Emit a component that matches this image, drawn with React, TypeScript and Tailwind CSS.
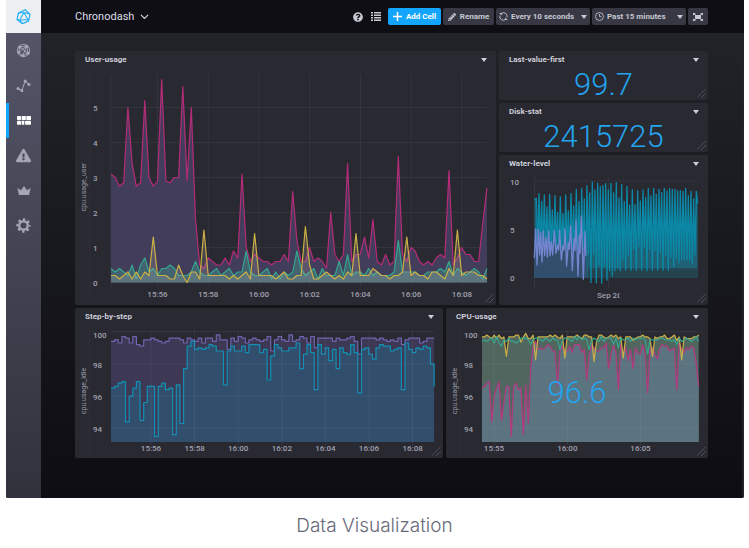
import type { ReactNode } from "react";
import { FaExclamationTriangle, FaQuestionCircle, FaPencilAlt } from "react-icons/fa";

/* ---------- data: one sample every ten seconds ---------- */

const userCpu = [
  3.1, 3, 2.75, 2.85, 5, 3.4, 2.75, 2.85, 5.2, 3, 2.75, 2.9, 5.8, 2.9, 2.85, 3, 3, 5.6, 2.9, 5, 1.8, 0.5, 0.4, 0.7, 0.6,
  0.5, 0.5, 0.7, 0.5, 0.9, 0.7, 3.1, 1, 0.6, 0.8, 0.7, 0.6, 0.6, 0.5, 0.6, 0.6, 0.8, 0.6, 2.6, 1.2, 0.6, 0.6, 1, 0.6,
  0.7, 0.6, 0.4, 2, 0.8, 0.6, 0.8, 3.4, 0.6, 0.8, 0.8, 1.3, 0.7, 1.8, 0.6, 0.5, 0.8, 0.5, 0.6, 3.6, 0.8, 0.6, 1, 0.9,
  0.6, 0.5, 0.6, 0.5, 0.7, 0.8, 0.7, 3.2, 0.5, 0.7, 1, 0.8, 0.8, 0.6, 0.6, 1.7, 2.7,
];
const yellowCpu = [
  0.2, 0.2, 0.1, 0.2, 0.3, 0.1, 0.3, 0.1, 0.3, 0.2, 1.3, 0.2, 0.2, 0.2, 0.1, 0.1, 0.5, 0.2, 0, 0.3, 0.3, 0.1, 1.5, 0.2,
  0.2, 0.2, 0.2, 0.2, 0.1, 0.2, 0.1, 0.2, 0.3, 0.1, 1.4, 0.2, 0.2, 0.2, 0.2, 0.1, 0.2, 0.3, 0.1, 0.1, 0.2, 0.2, 1.6,
  0.5, 0.1, 0.1, 0.2, 0.3, 0.2, 0.1, 0.2, 0.1, 0.3, 0.2, 1.4, 0.2, 0.2, 0.2, 0.4, 0.3, 0.2, 0.2, 0.1, 0.2, 0.2, 0.3,
  1.3, 0.2, 0.3, 0.2, 0.2, 0.1, 0.3, 0.3, 0.2, 0.1, 0.4, 0.2, 1.5, 0.2, 0.3, 0.3, 0.3, 0.2, 0.2, 0.1,
];
const tealCpu = [
  0.4, 0.3, 0.4, 0.3, 0.2, 0.5, 0.1, 0.5, 0.7, 0.3, 0.4, 0.2, 0.4, 0.4, 0.5, 0.4, 0.2, 0.2, 0.2, 0.3, 0.6, 0.3, 0.2,
  0.2, 0.3, 0.4, 0.2, 0.3, 0.4, 0.2, 0.3, 0.3, 0.9, 0.3, 0.2, 0.2, 0.3, 0.4, 0.1, 0.3, 0.1, 0.3, 0.2, 0.3, 0.9, 0.4,
  0.2, 0.3, 0.4, 0.1, 0.4, 0.2, 0.2, 0.2, 0.6, 0.2, 0.8, 0.2, 0.3, 0.3, 0.2, 0.4, 0.2, 0.3, 0.2, 0.2, 0.2, 0.3, 1.2,
  0.3, 0.3, 0.3, 0.3, 0.2, 0.2, 0.3, 0.3, 0.3, 0.4, 0.3, 0.6, 0.2, 0.4, 0.3, 0.2, 0.3, 0.4, 0.3, 0.1, 0.4,
];
const idleTotal = [
  96.5, 96.6, 96.8, 96.9, 94.4, 96, 96.5, 96.9, 94.5, 95.6, 96.6, 96.6, 93.5, 96.6, 96.8, 96.4, 96.5, 93.6, 96.7, 94.3,
  97.7, 99.1, 99.4, 98.9, 99, 98.9, 99, 99.2, 99.1, 98.8, 98.8, 96.7, 98.8, 99.1, 98.8, 98.8, 99.1, 98.7, 99.2, 99.2,
  99.2, 98.7, 98.9, 97, 98.5, 99.2, 99, 98.8, 98.8, 99, 99, 99.3, 97.7, 98.6, 99.2, 98.7, 96.4, 99.2, 98.6, 99, 98.2,
  98.9, 97.7, 99, 98.7, 98.6, 99.2, 98.7, 96.2, 98.9, 99, 98.6, 98.3, 99, 99.2, 99.1, 99.1, 98.8, 98.9, 99, 96.4,
  99.3, 98.9, 98.7, 99, 98.9, 99.1, 99, 98, 96.6,
];
const idleCore = [
  99.4, 99.5, 99.3, 99.7, 99.6, 99.3, 99.7, 99.2, 99.1, 99.5, 99.5, 99.6, 99.5, 99.4, 99.3, 99.4, 99.6, 99.6, 99.6, 99.5,
  99.3, 99.6, 99.5, 99.4, 99.6, 99.3, 99.6, 99.6, 99.4, 99.8, 99.5, 99.5, 98.9, 99.6, 99.4, 99.7, 99.6, 99.3, 99.5,
  99.6, 99.5, 99.4, 99.5, 99.7, 98.8, 99.5, 99.7, 99.5, 99.4, 99.8, 99.4, 99.5, 99.7, 99.6, 99.3, 99.7, 99, 99.6, 99.6,
  99.6, 99.6, 99.4, 99.6, 99.5, 99.5, 99.6, 99.7, 99.4, 98.6, 99.6, 99.6, 99.6, 99.6, 99.5, 99.6, 99.5, 99.4, 99.5,
  99.4, 99.6, 99.2, 99.5, 99.6, 99.6, 99.6, 99.3, 99.4, 99.6, 99.6, 99.6,
];
const yellowIdle = yellowCpu.map((v) => 99.9 - v * 1.1);
const tealIdle = tealCpu.map((v) => 99.8 - v);

/* Tide heights, alternating high and low water, as depth below the plot's top edge */
const tideHigh = [
  145, 131, 154, 135, 171, 133, 180, 137, 187, 140, 190, 135, 182, 131, 168, 118, 155, 115, 147, 107, 129, 96, 120, 100,
  110, 106, 101, 118, 100, 129, 98, 144, 104, 155, 109, 165, 119, 164, 122, 153, 120, 143, 115, 138, 115, 133, 118, 128,
  115, 123, 115, 118, 118, 123, 122, 124, 115, 137, 124, 147, 124,
];
const tideLow = [
  300, 290, 310, 292, 315, 295, 318, 290, 316, 292, 320, 295, 325, 300, 340, 305, 355, 310, 375, 312, 398, 313, 398, 345,
  400, 350, 390, 362, 378, 362, 355, 362, 330, 360, 318, 360, 298, 360, 290, 360, 293, 362, 298, 360, 302, 360, 308,
  360, 315, 360, 322, 350, 325, 338, 328, 328, 330, 330, 340, 314, 332,
];
const harbour: [number, number][] = [
  [118, 325], [122, 237], [126, 345], [130, 238], [134, 315], [137, 247], [141, 336], [145, 243], [149, 317], [153, 262],
  [157, 322], [161, 243], [165, 317], [169, 275], [173, 315], [178, 242], [183, 310], [188, 285], [191, 300], [194, 240],
  [199, 330], [204, 287], [207, 300], [210, 236], [215, 348], [220, 278], [223, 298], [227, 227], [232, 362], [237, 265],
  [240, 302], [243, 210], [249, 378], [253, 255], [255, 310], [259, 198], [265, 388], [270, 245], [273, 318],
];

/* ---------- chart helpers ---------- */

type Point = [number, number];
const toPath = (pts: Point[]) => "M" + pts.map(([x, y]) => `${x.toFixed(1)},${y.toFixed(1)}`).join("L");
const toArea = (pts: Point[], base: number) =>
  `${toPath(pts)}L${pts[pts.length - 1][0]},${base}L${pts[0][0]},${base}Z`;
const plot = (values: number[], x0: number, dx: number, y: (v: number) => number): Point[] =>
  values.map((v, i) => [x0 + i * dx, y(v)]);
const toSteps = (pts: Point[]): Point[] =>
  pts.flatMap((p, i) => (i === 0 ? [p] : ([[p[0], pts[i - 1][1]], p] as Point[])));

const GRID = "#34343f";

function Series({ pts, base, line, fill }: { pts: Point[]; base: number; line: string; fill: string }) {
  return (
    <>
      <path d={toArea(pts, base)} fill={fill} />
      <path d={toPath(pts)} fill="none" stroke={line} strokeWidth="1.200" strokeLinejoin="round" />
    </>
  );
}

function Axis({ ticks, y, children }: { ticks: [number, string][]; y: number; children?: ReactNode }) {
  return (
    <g className="fill-[#a0a1ae] font-medium" fontSize="8">
      {ticks.map(([x, label]) => (
        <text key={label} x={x} y={y} textAnchor="middle">
          {label}
        </text>
      ))}
      {children}
    </g>
  );
}

function AxisTitle({ x, y, children }: { x: number; y: number; children: string }) {
  return (
    <text transform={`translate(${x} ${y}) rotate(-90)`} textAnchor="middle" fontSize="7" className="fill-[#9899a6]">
      {children}
    </text>
  );
}

/* ---------- charts ---------- */

function UserUsageChart() {
  const y = (v: number) => 282.5 - v * 35;
  const ticks: [number, string][] = ["15:56", "15:58", "16:00", "16:02", "16:04", "16:06", "16:08"].map((t, i) => [
    157.5 + i * 50.75,
    t,
  ]);
  return (
    <svg viewBox="75 69 421 236" className="block w-full" role="img" aria-label="CPU usage by user">
      <g stroke={GRID}>
        <path d="M89.500 74V298" stroke="#2f2f39" />
        <path d="M111 74V287" />
        {ticks.map(([x]) => (
          <path key={x} d={`M${x} 74V287`} />
        ))}
        {[0, 1, 2, 3, 4, 5].map((v) => (
          <path key={v} d={`M111 ${y(v)}H487`} />
        ))}
      </g>
      <Series pts={plot(userCpu, 111, 4.225, y)} base={y(0)} line="#b42c78" fill="#423d5a" />
      <Series pts={plot(tealCpu, 111, 4.225, y)} base={y(0)} line="#35a68e" fill="rgba(70,190,170,.3)" />
      <Series pts={plot(yellowCpu, 111, 4.225, y)} base={y(0)} line="#ccb046" fill="rgba(200,190,180,.2)" />
      <Axis ticks={ticks} y={297}>
        {[0, 1, 2, 3, 4, 5].map((v) => (
          <text key={v} x={93} y={y(v) + 3}>
            {v}
          </text>
        ))}
      </Axis>
      <AxisTitle x={86} y={187}>cpu.usage_user</AxisTitle>
    </svg>
  );
}

const idleY = (v: number) => 331.7 + (100 - v) * 16.1;

function IdleLabels({ x }: { x: number }) {
  return (
    <>
      <text x={x} y={338}>100</text>
      {[98, 96, 94].map((v) => (
        <text key={v} x={x} y={idleY(v) + 4}>
          {v}
        </text>
      ))}
    </>
  );
}

function StepChart() {
  const ticks: [number, string][] = ["15:56", "15:58", "16:00", "16:02", "16:04", "16:06", "16:08"].map((t, i) => [
    151 + i * 43.6,
    t,
  ]);
  return (
    <svg viewBox="75 326 368 132" className="block w-full" role="img" aria-label="Idle CPU, step by step">
      <path d="M89.500 330V453" stroke="#2f2f39" />
      <Series pts={toSteps(plot(idleCore, 111, 3.63, idleY))} base={442} line="#7064b0" fill="#3d3853" />
      <Series pts={toSteps(plot(idleTotal, 111, 3.63, idleY))} base={442} line="#138fb4" fill="#314f6c" />
      <g stroke="#8090b0" strokeOpacity=".13">
        {ticks.map(([x]) => (
          <path key={x} d={`M${x} 330V446`} />
        ))}
        {[100, 98, 96, 94].map((v) => (
          <path key={v} d={`M111 ${idleY(v)}H434`} />
        ))}
      </g>
      <Axis ticks={ticks} y={451}>
        <IdleLabels x={93} />
      </Axis>
      <AxisTitle x={86} y={391}>cpu.usage_idle</AxisTitle>
    </svg>
  );
}

function CpuChart() {
  const ticks: [number, string][] = [
    [494, "15:55"],
    [567.3, "16:00"],
    [640.5, "16:05"],
  ];
  return (
    <svg viewBox="446 326 262 132" className="block w-full" role="img" aria-label="Idle CPU">
      <path d="M460.500 330V453" stroke="#2f2f39" />
      <path d={toArea(plot(yellowIdle, 482, 2.435, idleY), 442)} fill="#526660" />
      <path d={toArea(plot(idleTotal, 482, 2.435, idleY), 442)} fill="#5c7380" />
      <g stroke="#9aaab8" strokeOpacity=".12">
        {ticks.map(([x]) => (
          <path key={x} d={`M${x} 330V446`} />
        ))}
        {[100, 98, 96, 94].map((v) => (
          <path key={v} d={`M482 ${idleY(v)}H698`} />
        ))}
      </g>
      <g fill="none" strokeLinejoin="round" strokeWidth="1.200">
        <path d={toPath(plot(idleTotal, 482, 2.435, idleY))} stroke="#b23a80" />
        <path d={toPath(plot(yellowIdle, 482, 2.435, idleY))} stroke="#ccb046" />
        <path d={toPath(plot(tealIdle, 482, 2.435, idleY))} stroke="#35a68e" />
      </g>
      <Axis ticks={ticks} y={451}>
        <IdleLabels x={464} />
      </Axis>
      <AxisTitle x={457} y={391}>cpu.usage_idle</AxisTitle>
    </svg>
  );
}

function WaterChart() {
  const coast: Point[] = [[118, 148], ...tideHigh.flatMap((h, i): Point[] => [[124 + i * 8, h], [128 + i * 8, tideLow[i]]])];
  const shown = coast.filter(([x]) => x < 606).concat([[608, 160]]);
  return (
    <svg viewBox="499 173 209 132" className="block w-full" role="img" aria-label="Water level">
      <clipPath id="date-label">
        <path d="M590 285h29.500v16h-30z" />
      </clipPath>
      <g stroke={GRID}>
        <path d="M534.500 177V288M608.500 177V288M534 181H698M534 229.300H698M534 277.300H698" />
      </g>
      <g transform="translate(495 150) scale(.3333)">
        <path d={toArea(shown, 383)} fill="#1f6074" />
        <path d="M280 383V355H608V383Z" fill="#25434f" />
        <path d={toPath(shown)} fill="none" stroke="#0b88a6" strokeWidth="4" strokeLinejoin="round" />
        <path d="M118 383V300H273L276 383Z" fill="#314f6c" />
        <path d={toArea(harbour, 383)} fill="#314f6c" />
        <path d={toPath(harbour)} fill="none" stroke="#7484cf" strokeWidth="4" strokeLinejoin="round" />
      </g>
      <Axis ticks={[]} y={0}>
        <text x={597} y={298} clipPath="url(#date-label)">Sep 20</text>
        <text x={510} y={185}>10</text>
        <text x={510} y={233}>5</text>
        <text x={510} y={281}>0</text>
      </Axis>
    </svg>
  );
}

/* ---------- icons ---------- */

function Caret() {
  return (
    <svg viewBox="0 0 6 4" className="pointer-events-none h-1 w-1.5 shrink-0 fill-current" aria-hidden="true">
      <path d="M0 0h6L3 4z" />
    </svg>
  );
}

function LogoIcon() {
  return (
    <svg viewBox="0 0 44 46" className="w-[15px]" fill="none" stroke="#22adf6" strokeWidth="3.600" strokeLinejoin="round">
      <path d="M7 12 27 2 41 15 37 35 19 43 3 31Z" />
      <path d="M23 10 35 31 11 33ZM23 10 7 12M23 10 41 15M35 31 37 35M11 33 3 31M11 33 19 43" strokeWidth="3" />
    </svg>
  );
}

function HostsIcon() {
  return (
    <svg viewBox="0 0 44 44" className="w-[15px]" fill="none" stroke="currentColor" strokeWidth="2.800">
      <circle cx="22" cy="22" r="18" />
      <path d="M11 12 31 9 35 30 20 37 8 28 11 12 35 30M31 9 8 28M20 37 31 9" />
      <g fill="currentColor" stroke="none">
        <circle cx="11" cy="12" r="5" />
        <circle cx="31" cy="10" r="5" />
        <circle cx="35" cy="30" r="5" />
        <circle cx="20" cy="37" r="5" />
        <circle cx="8" cy="28" r="4" />
      </g>
    </svg>
  );
}

function GraphIcon() {
  return (
    <svg viewBox="0 0 44 40" className="w-[15px]" fill="none" stroke="currentColor" strokeWidth="3">
      <path d="M6 28 17 34 27 6 38 16" />
      <g fill="currentColor" stroke="none">
        <circle cx="6" cy="28" r="4.500" />
        <circle cx="17" cy="34" r="4.500" />
        <circle cx="27" cy="6" r="4.500" />
        <circle cx="38" cy="16" r="4.500" />
      </g>
    </svg>
  );
}

function DashboardIcon() {
  return (
    <svg viewBox="0 0 42 27" className="w-[14px]" fill="currentColor">
      <rect width="12" height="12" rx="2" />
      <rect x="14" width="12.500" height="12" rx="1" />
      <rect x="28" width="14" height="12" rx="2" />
      <rect y="14.500" width="12" height="12" rx="2" />
      <rect x="14" y="14.500" width="8" height="12" rx="1" />
      <rect x="24.500" y="14.500" width="17.500" height="12" rx="2" />
    </svg>
  );
}

function CrownIcon() {
  return (
    <svg viewBox="0 0 42 28" className="w-[14px]" fill="currentColor">
      <path d="M1 6 12 13 21 0 30 13 41 6 36 28H6Z" />
    </svg>
  );
}

function GearIcon() {
  return (
    <svg viewBox="0 0 44 44" className="w-[15px]" fill="none" stroke="currentColor">
      <circle cx="22" cy="22" r="12.500" strokeWidth="7" />
      <circle cx="22" cy="22" r="18" strokeWidth="6" pathLength="16" strokeDasharray="1 1" strokeDashoffset=".5" />
    </svg>
  );
}

function ListIcon() {
  return (
    <svg viewBox="0 0 10 9" className="h-[9px] w-2.5" fill="currentColor">
      <path d="M0 0h2v1.500H0zM3 0h7v1.500H3zM0 2.500h2V4H0zM3 2.500h7V4H3zM0 5h2v1.500H0zM3 5h7v1.500H3zM0 7.500h2V9H0zM3 7.500h7V9H3z" />
    </svg>
  );
}

function RefreshIcon() {
  return (
    <svg viewBox="0 0 10 10" className="w-[9px] shrink-0" fill="none" stroke="currentColor">
      <path d="M3 1.400A4 4 0 0 1 8.900 6M7 8.600A4 4 0 0 1 1.100 4" />
      <path d="M.2 1.200h3v2.600zM9.800 8.800h-3V6.200z" fill="currentColor" stroke="none" />
    </svg>
  );
}

function ClockIcon() {
  return (
    <svg viewBox="0 0 10 10" className="w-[9px] shrink-0" fill="none" stroke="currentColor" strokeWidth=".9">
      <circle cx="5" cy="5" r="4.400" />
      <path d="M5 2.200V5.200H7.400" />
    </svg>
  );
}

function PresentIcon() {
  return (
    <svg viewBox="0 0 10 8" className="w-[10px]" fill="currentColor">
      <rect x="2" y="2" width="6" height="4" />
      <path d="M0 0h3L0 2.500zM10 0H7l3 2.500zM0 8h3L0 5.500zM10 8H7l3-2.500z" />
      <path d="M1 1l8 6M9 1 1 7" stroke="currentColor" />
    </svg>
  );
}

/* ---------- page pieces ---------- */

function Cell({ title, span, children }: { title: string; span: string; children: ReactNode }) {
  return (
    <section className={`relative flex flex-col rounded-xs bg-[#292932] ${span}`}>
      <header className="flex h-[18px] shrink-0 items-center justify-between pr-[9px] pl-2.5 text-[#cdced8]">
        <h2 className="text-[8px] leading-none font-bold">{title}</h2>
        <button type="button" aria-label={`${title} menu`} className="flex">
          <Caret />
        </button>
      </header>
      <div className="relative flex flex-1 flex-col justify-center">{children}</div>
      <svg viewBox="0 0 9 9" className="absolute right-0.5 bottom-0.5 size-[9px]" stroke="#50515f" aria-hidden="true">
        <path d="M0 8.500 8.500 0M4 9 9 4" />
      </svg>
    </section>
  );
}

function Figure({ children }: { children: string }) {
  return <p className="text-center text-[31px] leading-[31px] font-light text-[#22a4ee]">{children}</p>;
}

function NavItem({ label, active, children }: { label: string; active?: boolean; children: ReactNode }) {
  return (
    <a
      href="#"
      aria-label={label}
      className={`flex h-[35px] items-center justify-center border-l-3 pr-[3px] ${
        active ? "border-[#12a5fb] text-white" : "border-transparent text-[#a4a6b4]"
      }`}
    >
      {children}
    </a>
  );
}

function Dropdown({ label, icon, value }: { label: string; icon: ReactNode; value: string }) {
  return (
    <label className="flex h-[17px] w-[94px] items-center gap-[3px] rounded-xs bg-[#383844] px-[3px]">
      {icon}
      <select aria-label={label} defaultValue={value} className="min-w-0 flex-1 appearance-none bg-transparent font-bold">
        <option>{value}</option>
      </select>
      <Caret />
    </label>
  );
}

export default function App() {
  return (
    <div className="bg-white font-['Roboto',sans-serif]">
      <div className="mr-[5px] ml-1.5 flex overflow-hidden rounded-b-xs bg-[#0f0e15]">
        <nav className="w-[35px] shrink-0 bg-linear-to-b from-[#56576a] to-[#32323d]">
          <a href="#" aria-label="Home" className="flex h-[33px] items-center justify-center bg-[#eeeff2]">
            <LogoIcon />
          </a>
          <NavItem label="Hosts"><HostsIcon /></NavItem>
          <NavItem label="Explore"><GraphIcon /></NavItem>
          <NavItem label="Dashboards" active><DashboardIcon /></NavItem>
          <NavItem label="Alerts"><FaExclamationTriangle size={15} /></NavItem>
          <NavItem label="Admin"><CrownIcon /></NavItem>
          <NavItem label="Settings"><GearIcon /></NavItem>
        </nav>

        <div className="min-w-0 flex-1">
          <header className="flex h-[33px] items-center justify-between pr-9 pl-[34px] text-[#c6c8d2]">
            <button type="button" className="flex items-center gap-1.5 text-[11px] leading-none text-[#dddee6]">
              Chronodash
              <svg viewBox="0 0 10 6" className="w-[9px]" fill="none" stroke="currentColor" strokeWidth="1.200">
                <path d="M1 1l4 4 4-4" />
              </svg>
            </button>
            <div className="flex items-center gap-0.5 text-[8px] leading-none font-bold">
              <button type="button" aria-label="Help" className="mr-1.5"><FaQuestionCircle size={10} /></button>
              <button type="button" aria-label="Template variables" className="mr-[5px]"><ListIcon /></button>
              <button type="button" className="flex h-[17px] w-[53px] items-center justify-center gap-1 rounded-xs bg-[#12a5fb] text-white">
                <svg viewBox="0 0 9 9" className="w-[9px]" stroke="currentColor" strokeWidth="1.500">
                  <path d="M4.500 0v9M0 4.500h9" />
                </svg>
                Add Cell
              </button>
              <button type="button" className="flex h-[17px] w-[51px] items-center justify-center gap-1 rounded-xs bg-[#383844]">
                <FaPencilAlt size={8} />
                Rename
              </button>
              <Dropdown label="Refresh interval" icon={<RefreshIcon />} value="Every 10 seconds" />
              <Dropdown label="Time range" icon={<ClockIcon />} value="Past 15 minutes" />
              <button type="button" aria-label="Presentation mode" className="flex h-[17px] w-5 items-center justify-center rounded-xs bg-[#383844]">
                <PresentIcon />
              </button>
            </div>
          </header>

          <main className="border-r-2 border-[#22222a] bg-linear-to-b from-[#222229] via-[#17171e] to-[#0e0d13] pt-[18px] pr-[34px] pb-10 pl-[34px]">
            <div className="grid grid-cols-12 grid-rows-[49px_49px_auto_auto] gap-[3px]">
              <Cell title="User-usage" span="col-span-8 row-span-3"><UserUsageChart /></Cell>
              <Cell title="Last-value-first" span="col-span-4"><Figure>99.7</Figure></Cell>
              <Cell title="Disk-stat" span="col-span-4"><Figure>2415725</Figure></Cell>
              <Cell title="Water-level" span="col-span-4"><WaterChart /></Cell>
              <Cell title="Step-by-step" span="col-span-7"><StepChart /></Cell>
              <Cell title="CPU-usage" span="col-span-5">
                <CpuChart />
                <div className="absolute inset-0 flex items-center justify-center">
                  <Figure>96.6</Figure>
                </div>
              </Cell>
            </div>
          </main>
        </div>
      </div>
      <p className="py-4 text-center font-['Inter',sans-serif] text-[19px] leading-6 font-light text-[#676978]">
        Data Visualization
      </p>
    </div>
  );
}
